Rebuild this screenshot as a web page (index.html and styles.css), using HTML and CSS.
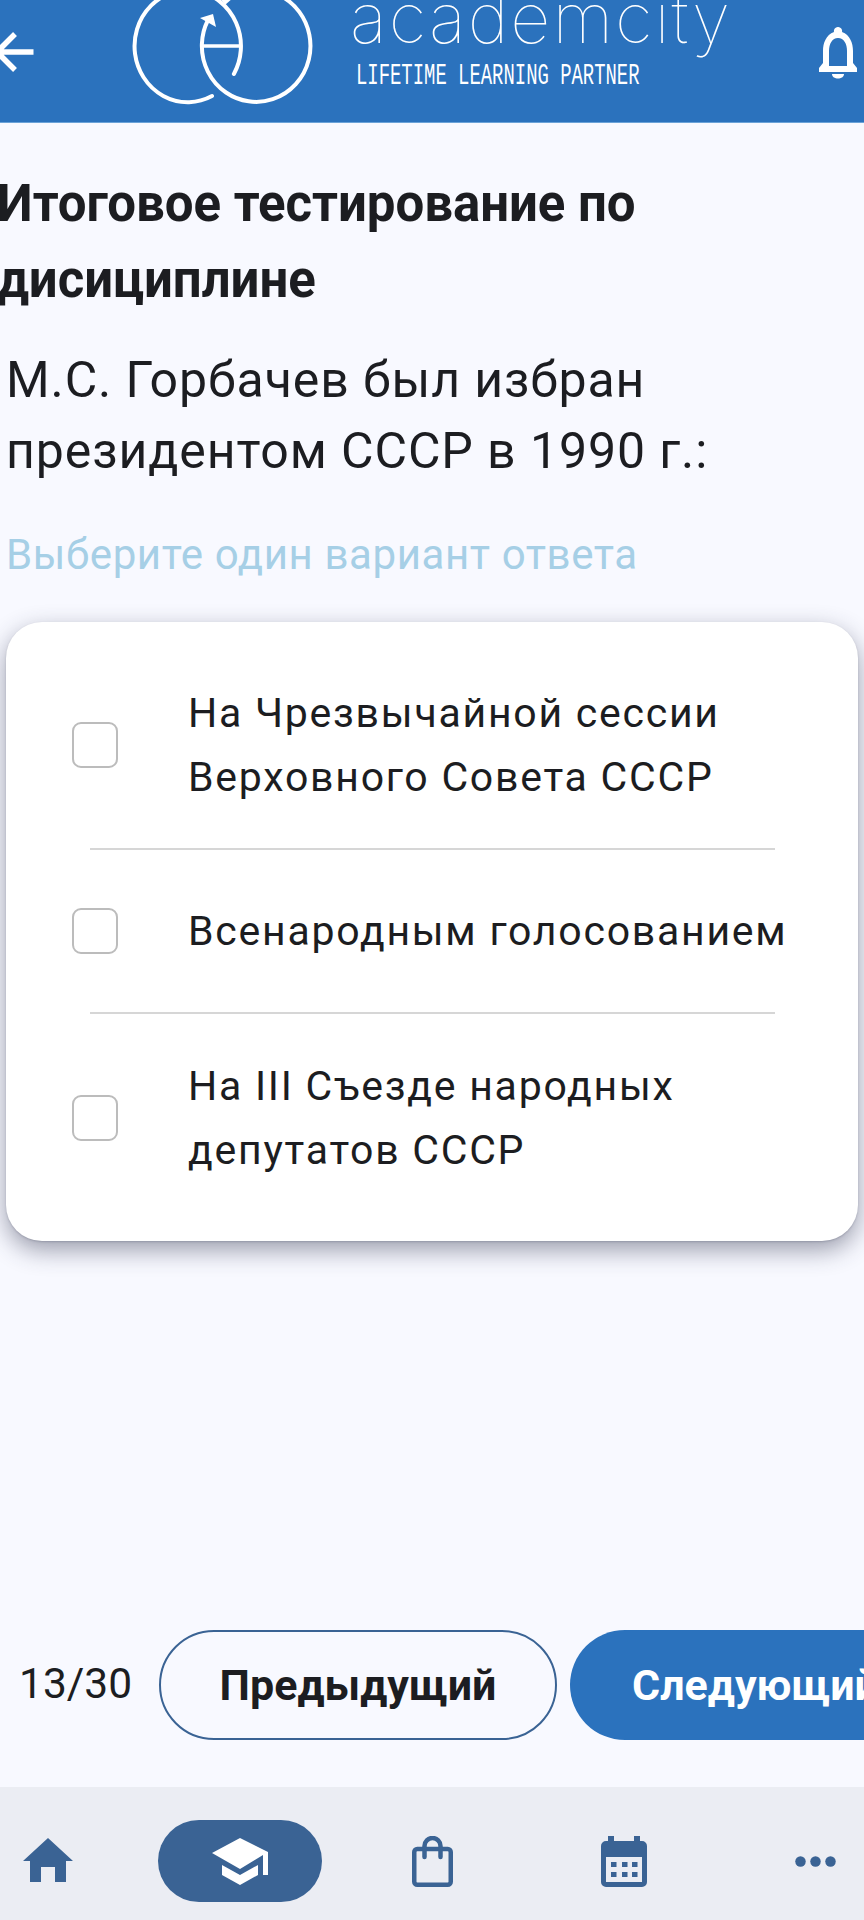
FILE: index.html
```html
<!DOCTYPE html>
<html lang="ru">
<head>
<meta charset="utf-8">
<title>Итоговое тестирование</title>
<link rel="stylesheet" href="styles.css">
</head>
<body>
<div class="page">
  <header class="header">
    <svg class="back" viewBox="0 0 36 44" width="36" height="44"><path d="M33.500 22H0M15 4L-3 22L15 40" fill="none" stroke="#fff" stroke-width="5.500"/></svg>
    <svg class="mark" viewBox="0 0 210 115" width="210" height="115">
      <g fill="none" stroke="#fff" stroke-width="4">
        <path d="M113.900 74A53.200 56 0 1 0 92 96" stroke-linecap="round"/>
        <path d="M88 20A54.300 56 0 1 0 108 -2"/>
        <path d="M82 46H120" stroke-width="3.500"/>
      </g>
      <path d="M80 18L93 14L96 27Z" fill="#fff"/>
      <path d="M100 -2H113L105 5Z" fill="#fff"/>
    </svg>
    <div class="brand">
      <div class="brand-name">academcity</div>
      <div class="brand-tag">LIFETIME LEARNING PARTNER</div>
    </div>
    <svg class="bell" viewBox="0 0 40 52" width="40" height="52"><path d="M20 0a4 4 0 0 1 4 5C32 8 35 16 35 24V36L39 41V45H1V41L5 36V24C5 16 8 8 16 5A4 4 0 0 1 20 0ZM20 11C14 11 11 17 11 24V39H29V24C29 17 26 11 20 11ZM14 47H26C26 53 14 53 14 47Z" fill="#fff" fill-rule="evenodd"/></svg>
  </header>

  <main class="main">
    <h1 class="title">Итоговое тестирование по дисициплине</h1>
    <p class="question">М.С. Горбачев был избран президентом СССР в 1990 г.:</p>
    <p class="hint">Выберите один вариант ответа</p>
    <section class="card">
      <label class="option"><span class="box"></span><span class="opt-text">На Чрезвычайной сессии Верховного Совета СССР</span></label>
      <div class="rule"></div>
      <label class="option short"><span class="box"></span><span class="opt-text">Всенародным голосованием</span></label>
      <div class="rule"></div>
      <label class="option last"><span class="box"></span><span class="opt-text">На III Съезде народных депутатов СССР</span></label>
    </section>
  </main>

  <div class="pager">
    <span class="count">13/30</span>
    <button class="btn btn-prev">Предыдущий</button>
    <button class="btn btn-next">Следующий</button>
  </div>

  <nav class="nav">
    <svg class="nav-home" viewBox="0 0 50 44" width="50" height="44"><path d="M25 0L50 23H43V44H32V29H18V44H7V23H0Z" fill="#3a6394"/></svg>
    <div class="pill">
      <svg viewBox="0 0 56 47" width="56" height="47"><path d="M28 0L56 14V37H51V17L28 31L0 15Z" fill="#fff"/><path d="M10 27L28 37L46 27V37L28 47L10 37Z" fill="#fff"/></svg>
    </div>
    <svg class="nav-bag" viewBox="0 0 41 51" width="41" height="51"><rect x="2.250" y="13" width="36.500" height="35.750" rx="3" fill="none" stroke="#3a6394" stroke-width="4.500"/><path d="M12.500 21V10a8 8 0 0 1 16 0V21" fill="none" stroke="#3a6394" stroke-width="4.500" stroke-linecap="round"/></svg>
    <svg class="nav-cal" viewBox="0 0 46 51" width="46" height="51"><path d="M7 0h6v5h20V0h6v5h2a5 5 0 0 1 5 5v36a5 5 0 0 1-5 5H5a5 5 0 0 1-5-5V10a5 5 0 0 1 5-5h2ZM5 21V46H41V21Z" fill="#3a6394" fill-rule="evenodd"/><path d="M10 26h5.500v5H10zM21 26h5.500v5H21zM31 26h5.500v5H31zM10 36h5.500v5H10zM21 36h5.500v5H21zM31 36h5.500v5H31z" fill="#3a6394"/></svg>
    <svg class="nav-more" viewBox="0 0 41 11" width="41" height="11"><circle cx="5.500" cy="5.500" r="5.250" fill="#3a6394"/><circle cx="20.500" cy="5.500" r="5.250" fill="#3a6394"/><circle cx="35.500" cy="5.500" r="5.250" fill="#3a6394"/></svg>
  </nav>
</div>
</body>
</html>
```
FILE: styles.css
```css
* { box-sizing: border-box; }
html, body { margin: 0; padding: 0; }
body { width: 864px; height: 1920px; overflow: hidden; font-family: Roboto, "Noto Sans", sans-serif; color: #1c1d21; background: #f8f9ff; }
.page { width: 864px; height: 1920px; display: flex; flex-direction: column; overflow: hidden; }

.header { position: relative; height: 123px; flex: none; background: #2b72bd; border-bottom: 1px solid #6ba3d8; display: flex; align-items: flex-start; overflow: hidden; }
.back { flex: none; margin-top: 30px; overflow: visible; }
.mark { flex: none; margin-left: 84px; overflow: visible; }
.brand { flex: none; margin: -24px 0 0 20px; width: 400px; color: #fff; }
.brand-name { font-family: Inter, sans-serif; font-weight: 100; font-size: 70px; line-height: 84px; letter-spacing: 2px; white-space: nowrap; }
.brand-tag { font-family: "Liberation Mono", monospace; font-size: 30px; line-height: 30px; transform: scaleX(0.63); transform-origin: left center; margin-top: 1px; margin-left: 6px; white-space: nowrap; }
.bell { position: absolute; right: 6px; top: 27px; }

.main { flex: 1; display: flex; flex-direction: column; min-height: 0; }
.title { margin: 43px 0 0 -3px; width: 700px; font-size: 51px; line-height: 76px; font-weight: 700; letter-spacing: -0.05px; }
.question { margin: 27px 0 0 6px; width: 760px; font-size: 50px; line-height: 71px; letter-spacing: 0.9px; }
.hint { margin: 43px 0 0 6px; font-size: 42px; line-height: 50px; color: #a6cfe6; letter-spacing: 0.6px; }
.card { margin: 42px 0 0 6px; width: 852px; height: 619px; flex: none; background: #fff; border-radius: 36px; box-shadow: 0 1px 2px rgba(40, 45, 70, 0.2), 0 9px 24px rgba(40, 45, 70, 0.45); display: flex; flex-direction: column; padding: 19px 0; }
.option { display: flex; align-items: center; height: 207px; flex: none; padding-left: 66px; }
.option.short { height: 162px; }
.option.last { height: 208px; }
.box { flex: none; width: 46px; height: 46px; border: 2.5px solid #bcbcbc; border-radius: 9px; background: #fff; }
.opt-text { margin-left: 70px; font-size: 41px; line-height: 64px; letter-spacing: 1.75px; width: 640px; }
.short .opt-text { white-space: nowrap; }
.rule { flex: none; height: 2px; width: 685px; margin-left: 84px; background: #d6d6d6; }

.pager { flex: none; height: 157px; display: flex; align-items: flex-start; padding: 0 0 0 19px; }
.count { width: 140px; flex: none; font-size: 42.500px; line-height: 108px; }
.btn { flex: none; height: 110px; border-radius: 55px; font-family: Roboto, sans-serif; font-size: 43px; font-weight: 700; }
.btn-prev { width: 398px; background: #f8f9ff; border: 2px solid #3a6394; color: #1c1d21; }
.btn-next { width: 398px; margin-left: 13px; background: #2b72bd; border: 0; color: #fff; padding: 0 0 0 62px; text-align: left; white-space: nowrap; }

.nav { flex: none; height: 133px; background: #ebedf3; display: flex; align-items: flex-start; padding-left: 23px; }
.nav-home { flex: none; margin-top: 51px; }
.pill { flex: none; margin: 33px 0 0 85px; width: 164px; height: 82px; border-radius: 41px; background: #3a6394; display: flex; align-items: center; justify-content: center; }
.nav-bag { flex: none; margin: 49px 0 0 90px; }
.nav-cal { flex: none; margin: 49px 0 0 148px; }
.nav-more { flex: none; margin: 69px 0 0 148px; }
```
